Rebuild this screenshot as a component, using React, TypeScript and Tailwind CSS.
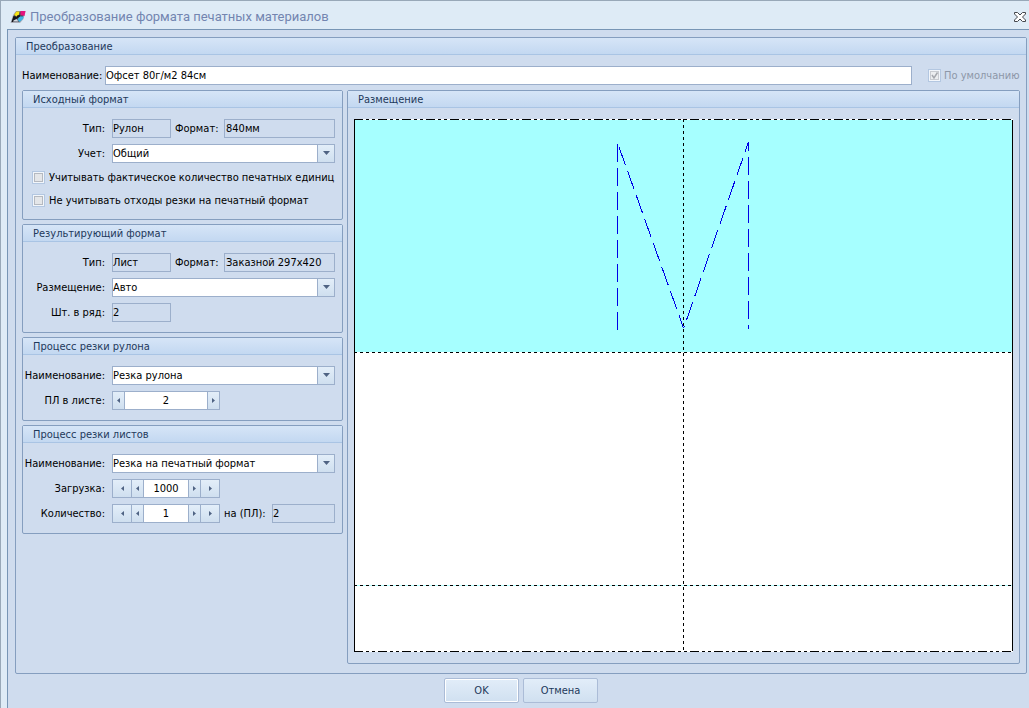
import React, { useId } from 'react';

const FIELD = 'h-[19px] border border-[#9cafcb] text-black outline-none';
const READONLY_FIELD = `${FIELD} bg-[#cfdcee] min-w-0`;
const STEP_BUTTON =
  'flex h-[19px] items-center justify-center border border-[#9cafcb] bg-linear-to-b from-[#e3eef9] to-[#cfdfef]';

const COLUMNS = [617, 748];

interface GroupProps {
  title: string;
  className?: string;
  children: React.ReactNode;
}

const Group: React.FC<GroupProps> = ({ title, className = '', children }) => (
  <section className={`rounded-xs border border-[#859ebf] ${className}`}>
    <h2 className="h-[17px] border-b border-[#a9c4e4] bg-linear-to-b from-[#d6e5f7] to-[#c3d8f1] pl-[10px] leading-[17px] text-[#1e395b]">
      {title}
    </h2>
    {children}
  </section>
);

interface RowProps {
  label: string;
  htmlFor: string;
  children: React.ReactNode;
}

const Row: React.FC<RowProps> = ({ label, htmlFor, children }) => (
  <div className="flex items-center">
    <label htmlFor={htmlFor} className="mr-[7px] w-[82px] shrink-0 text-right whitespace-nowrap">
      {label}
    </label>
    {children}
  </div>
);

const Fields: React.FC<{ children: React.ReactNode }> = ({ children }) => (
  <div className="flex flex-col gap-[6px] pt-[11px] pr-[7px] pb-[10px]">{children}</div>
);

const TypeRow: React.FC<{ type: string; format: string }> = ({ type, format }) => {
  const id = useId();

  return (
    <Row label="Тип:" htmlFor={`${id}-type`}>
      <input id={`${id}-type`} className={`${READONLY_FIELD} w-[59px]`} value={type} readOnly />
      <label htmlFor={`${id}-format`} className="w-[53px] pl-1 whitespace-nowrap">
        Формат:
      </label>
      <input
        id={`${id}-format`}
        className={`${READONLY_FIELD} flex-1 pl-px`}
        value={format}
        readOnly
      />
    </Row>
  );
};

const SelectRow: React.FC<{ label: string; value: string }> = ({ label, value }) => {
  const id = useId();

  return (
    <Row label={label} htmlFor={id}>
      <div className="relative flex flex-1">
        <select id={id} className={`${FIELD} w-full appearance-none bg-white pr-5`}>
          <option>{value}</option>
        </select>
        <span className="pointer-events-none absolute top-0 right-0 flex h-[19px] w-[18px] items-center justify-center border border-[#9cafcb] bg-linear-to-b from-[#e3eef9] to-[#cfdfef] pb-px">
          <svg width="7" height="4" viewBox="0 0 7 4" aria-hidden="true">
            <path d="M0 0H7L3.5 4Z" fill="#4f6383" />
          </svg>
        </span>
      </div>
    </Row>
  );
};

interface StepButtonProps {
  label: string;
  forward?: boolean;
  className: string;
}

const StepButton: React.FC<StepButtonProps> = ({ label, forward, className }) => (
  <button type="button" aria-label={label} className={`${STEP_BUTTON} ${className}`}>
    <svg width="3" height="5" viewBox="0 0 3 5" aria-hidden="true">
      <path d={forward ? 'M0 0L3 2.5L0 5Z' : 'M3 0L0 2.5L3 5Z'} fill="#4f6383" />
    </svg>
  </button>
);

interface StepperProps {
  id: string;
  value: string;
  double?: boolean;
}

const Stepper: React.FC<StepperProps> = ({ id, value, double }) => (
  <div className="flex w-[108px]">
    {double && <StepButton label="Намного меньше" className="w-5" />}
    <StepButton label="Меньше" className={double ? '-ml-px w-[13px]' : 'w-[13px]'} />
    <input
      id={id}
      className={`${FIELD} -mx-px min-w-0 flex-1 bg-white text-center`}
      defaultValue={value}
    />
    <StepButton label="Больше" forward className="w-[13px]" />
    {double && <StepButton label="Намного больше" forward className="-ml-px w-5" />}
  </div>
);

const CHECKBOX = 'size-[13px] appearance-none border border-[#b3c7e1] bg-[#f2f6fb] p-px';

const CheckRow: React.FC<{ label: string }> = ({ label }) => (
  <label className="flex h-[23px] items-center gap-1 pl-[9px] whitespace-nowrap">
    <span className="grid size-[13px] shrink-0 place-items-center">
      <input type="checkbox" className={`${CHECKBOX} col-start-1 row-start-1`} />
      <span className="pointer-events-none col-start-1 row-start-1 size-[9px] border border-[#b5b9c0] bg-[#e4e6e9]" />
    </span>
    {label}
  </label>
);

const AppIcon: React.FC = () => (
  <svg width="16" height="14" viewBox="0 0 16 14" aria-hidden="true">
    <path d="M6 1H15.500L13.500 9L10 13H0.500L3 5Z" fill="#a9adb8" />
    <path d="M6.500 1.500H14.500L12.500 8.500L9.500 12H2L4 5Z" fill="#4a4a54" />
    <path d="M4 5L6.500 1.500H9.500L9 4.500L7 6.500Z" fill="#f7e414" />
    <path d="M10.500 1H15.500L14.500 6L10.500 5Z" fill="#e5127d" />
    <path d="M9.500 6.500L14 6.500L12.500 9.500L9.500 12L7.500 9.500Z" fill="#3cb4e5" />
    <path d="M3.500 6L7 7L6.500 10L3 12H1.500Z" fill="#15151a" />
    <path d="M7 5.500L10 5L10 6.500L7 8.500Z" fill="#15151a" />
    <path d="M3.500 10.500L6.500 9L8.500 11.500H3Z" fill="#d9dce3" />
  </svg>
);

const CloseIcon: React.FC = () => (
  <svg width="12" height="10" viewBox="0 0 12 10" aria-hidden="true">
    <path
      d="M0.500 0.500H3.500L6 3L8.500 0.500H11.500V2L8.500 5L11.500 8V9.500H8.500L6 7L3.500 9.500H0.500V8L3.500 5L0.500 2Z"
      fill="#fff"
      stroke="#44474d"
    />
  </svg>
);

// The sheet is drawn in window units, one unit per pixel at the default size.
const Layout: React.FC = () => (
  <svg
    className="block w-full"
    viewBox="354 119 659 533"
    fill="none"
    shapeRendering="crispEdges"
    role="img"
    aria-label="Размещение"
  >
    <rect x="354" y="119" width="659" height="533" fill="#fff" />
    <rect x="355" y="120" width="657" height="232" fill="#a6ffff" />
    <path d="M355 585.500H1012" stroke="#b4ffff" />
    <g stroke="#000">
      <path d="M354.500 119V652M1012.500 120V651" />
      <path d="M354 119.500H1013" strokeDasharray="9 3 3 3 3 3" />
      <path d="M354 651.500H1013" strokeDasharray="9 3 3 3 3 3" />
      <path d="M354 352.500H1013" strokeDasharray="3 3" />
      <path d="M354 585.500H1013" strokeDasharray="3 3" />
      <path d="M683.500 119V652" strokeDasharray="3 3" />
    </g>
    <g stroke="#0000e6">
      <path d={`M${COLUMNS[0]}.5 330V144`} strokeDasharray="18 6" />
      <path d={`M${COLUMNS[1]}.5 142V151`} />
      <path d={`M${COLUMNS[1]}.5 157V329`} strokeDasharray="18 6" />
      <path d="M619 147L683.500 328" strokeDasharray="19.100 6.400" />
      <path d="M686.500 320L748.500 142" strokeDasharray="19.100 6.400" />
      <path d="M683.500 328L684.500 326" />
    </g>
  </svg>
);

const DIALOG_BUTTON =
  'h-[25px] w-[75px] rounded-xs border border-[#abbcd7] bg-linear-to-b from-[#e2edf9] to-[#d0e0f0] text-[#1e395b]';

export default function App() {
  return (
    <div className="flex min-h-screen flex-col border-t border-l border-[#98a8b8] bg-[#deebf6] font-['DejaVu_Sans_Condensed','DejaVu_Sans',sans-serif] text-[11px] leading-4 text-black">
      <header className="flex h-[28px] items-center pt-1 pr-[3px] pl-[9px]">
        <AppIcon />
        <h1 className="ml-1 flex-1 font-[Roboto,sans-serif] text-[13px] text-[#7385b0]">
          Преобразование формата печатных материалов
        </h1>
        <button type="button" aria-label="Закрыть">
          <CloseIcon />
        </button>
      </header>

      <main className="ml-[6px] flex-1 border-t border-l border-[#7795b5] bg-[#cfdcee] pt-[7px] pr-[2px] pl-[7px]">
        <Group title="Преобразование">
          <div className="px-[6px] pt-[11px] pb-[9px]">
            <div className="flex items-center">
              <label htmlFor="name" className="w-[83px] whitespace-nowrap">
                Наименование:
              </label>
              <input
                id="name"
                className={`${FIELD} min-w-0 flex-1 bg-white`}
                defaultValue="Офсет 80г/м2 84см"
              />
              <label className="ml-4 flex w-[92px] items-center gap-[3px] whitespace-nowrap text-[#8d97a8]">
                <span className="grid size-[13px] shrink-0 place-items-center">
                  <input
                    type="checkbox"
                    className={`${CHECKBOX} col-start-1 row-start-1`}
                    defaultChecked
                    disabled
                  />
                  <svg
                    className="pointer-events-none col-start-1 row-start-1"
                    width="9"
                    height="9"
                    viewBox="0 0 9 9"
                    aria-hidden="true"
                  >
                    <rect x="0.500" y="0.500" width="8" height="8" fill="#eceef0" stroke="#c9ccd1" />
                    <path d="M2 4L4 7L7.500 1.500" fill="none" stroke="#a5a8ae" strokeWidth="1.500" />
                  </svg>
                </span>
                По умолчанию
              </label>
            </div>

            <div className="mt-[5px] flex items-start gap-1">
              <div className="flex w-[321px] shrink-0 flex-col gap-1">
                <Group title="Исходный формат">
                  <Fields>
                    <TypeRow type="Рулон" format="840мм" />
                    <SelectRow label="Учет:" value="Общий" />
                  </Fields>
                  <div className="-mt-[7px] pb-[7px]">
                    <CheckRow label="Учитывать фактическое количество печатных единиц" />
                    <CheckRow label="Не учитывать отходы резки на печатный формат" />
                  </div>
                </Group>

                <Group title="Результирующий формат">
                  <Fields>
                    <TypeRow type="Лист" format="Заказной 297x420" />
                    <SelectRow label="Размещение:" value="Авто" />
                    <Row label="Шт. в ряд:" htmlFor="per-row">
                      <input
                        id="per-row"
                        className={`${READONLY_FIELD} w-[59px]`}
                        value="2"
                        readOnly
                      />
                    </Row>
                  </Fields>
                </Group>

                <Group title="Процесс резки рулона">
                  <Fields>
                    <SelectRow label="Наименование:" value="Резка рулона" />
                    <Row label="ПЛ в листе:" htmlFor="sheets">
                      <Stepper id="sheets" value="2" />
                    </Row>
                  </Fields>
                </Group>

                <Group title="Процесс резки листов">
                  <Fields>
                    <SelectRow label="Наименование:" value="Резка на печатный формат" />
                    <Row label="Загрузка:" htmlFor="load">
                      <Stepper id="load" value="1000" double />
                    </Row>
                    <Row label="Количество:" htmlFor="count">
                      <Stepper id="count" value="1" double />
                      <label htmlFor="count-total" className="w-[52px] pl-1 whitespace-nowrap">
                        на (ПЛ):
                      </label>
                      <input
                        id="count-total"
                        className={`${READONLY_FIELD} flex-1`}
                        value="2"
                        readOnly
                      />
                    </Row>
                  </Fields>
                </Group>
              </div>

              <Group title="Размещение" className="min-w-0 flex-1">
                <div className="px-[6px] py-[11px]">
                  <Layout />
                </div>
              </Group>
            </div>
          </div>
        </Group>

        <div className="flex justify-center gap-1 py-1">
          <button type="button" className={`${DIALOG_BUTTON} inset-ring-1 inset-ring-white`}>
            OK
          </button>
          <button type="button" className={DIALOG_BUTTON}>
            Отмена
          </button>
        </div>
      </main>
    </div>
  );
}
